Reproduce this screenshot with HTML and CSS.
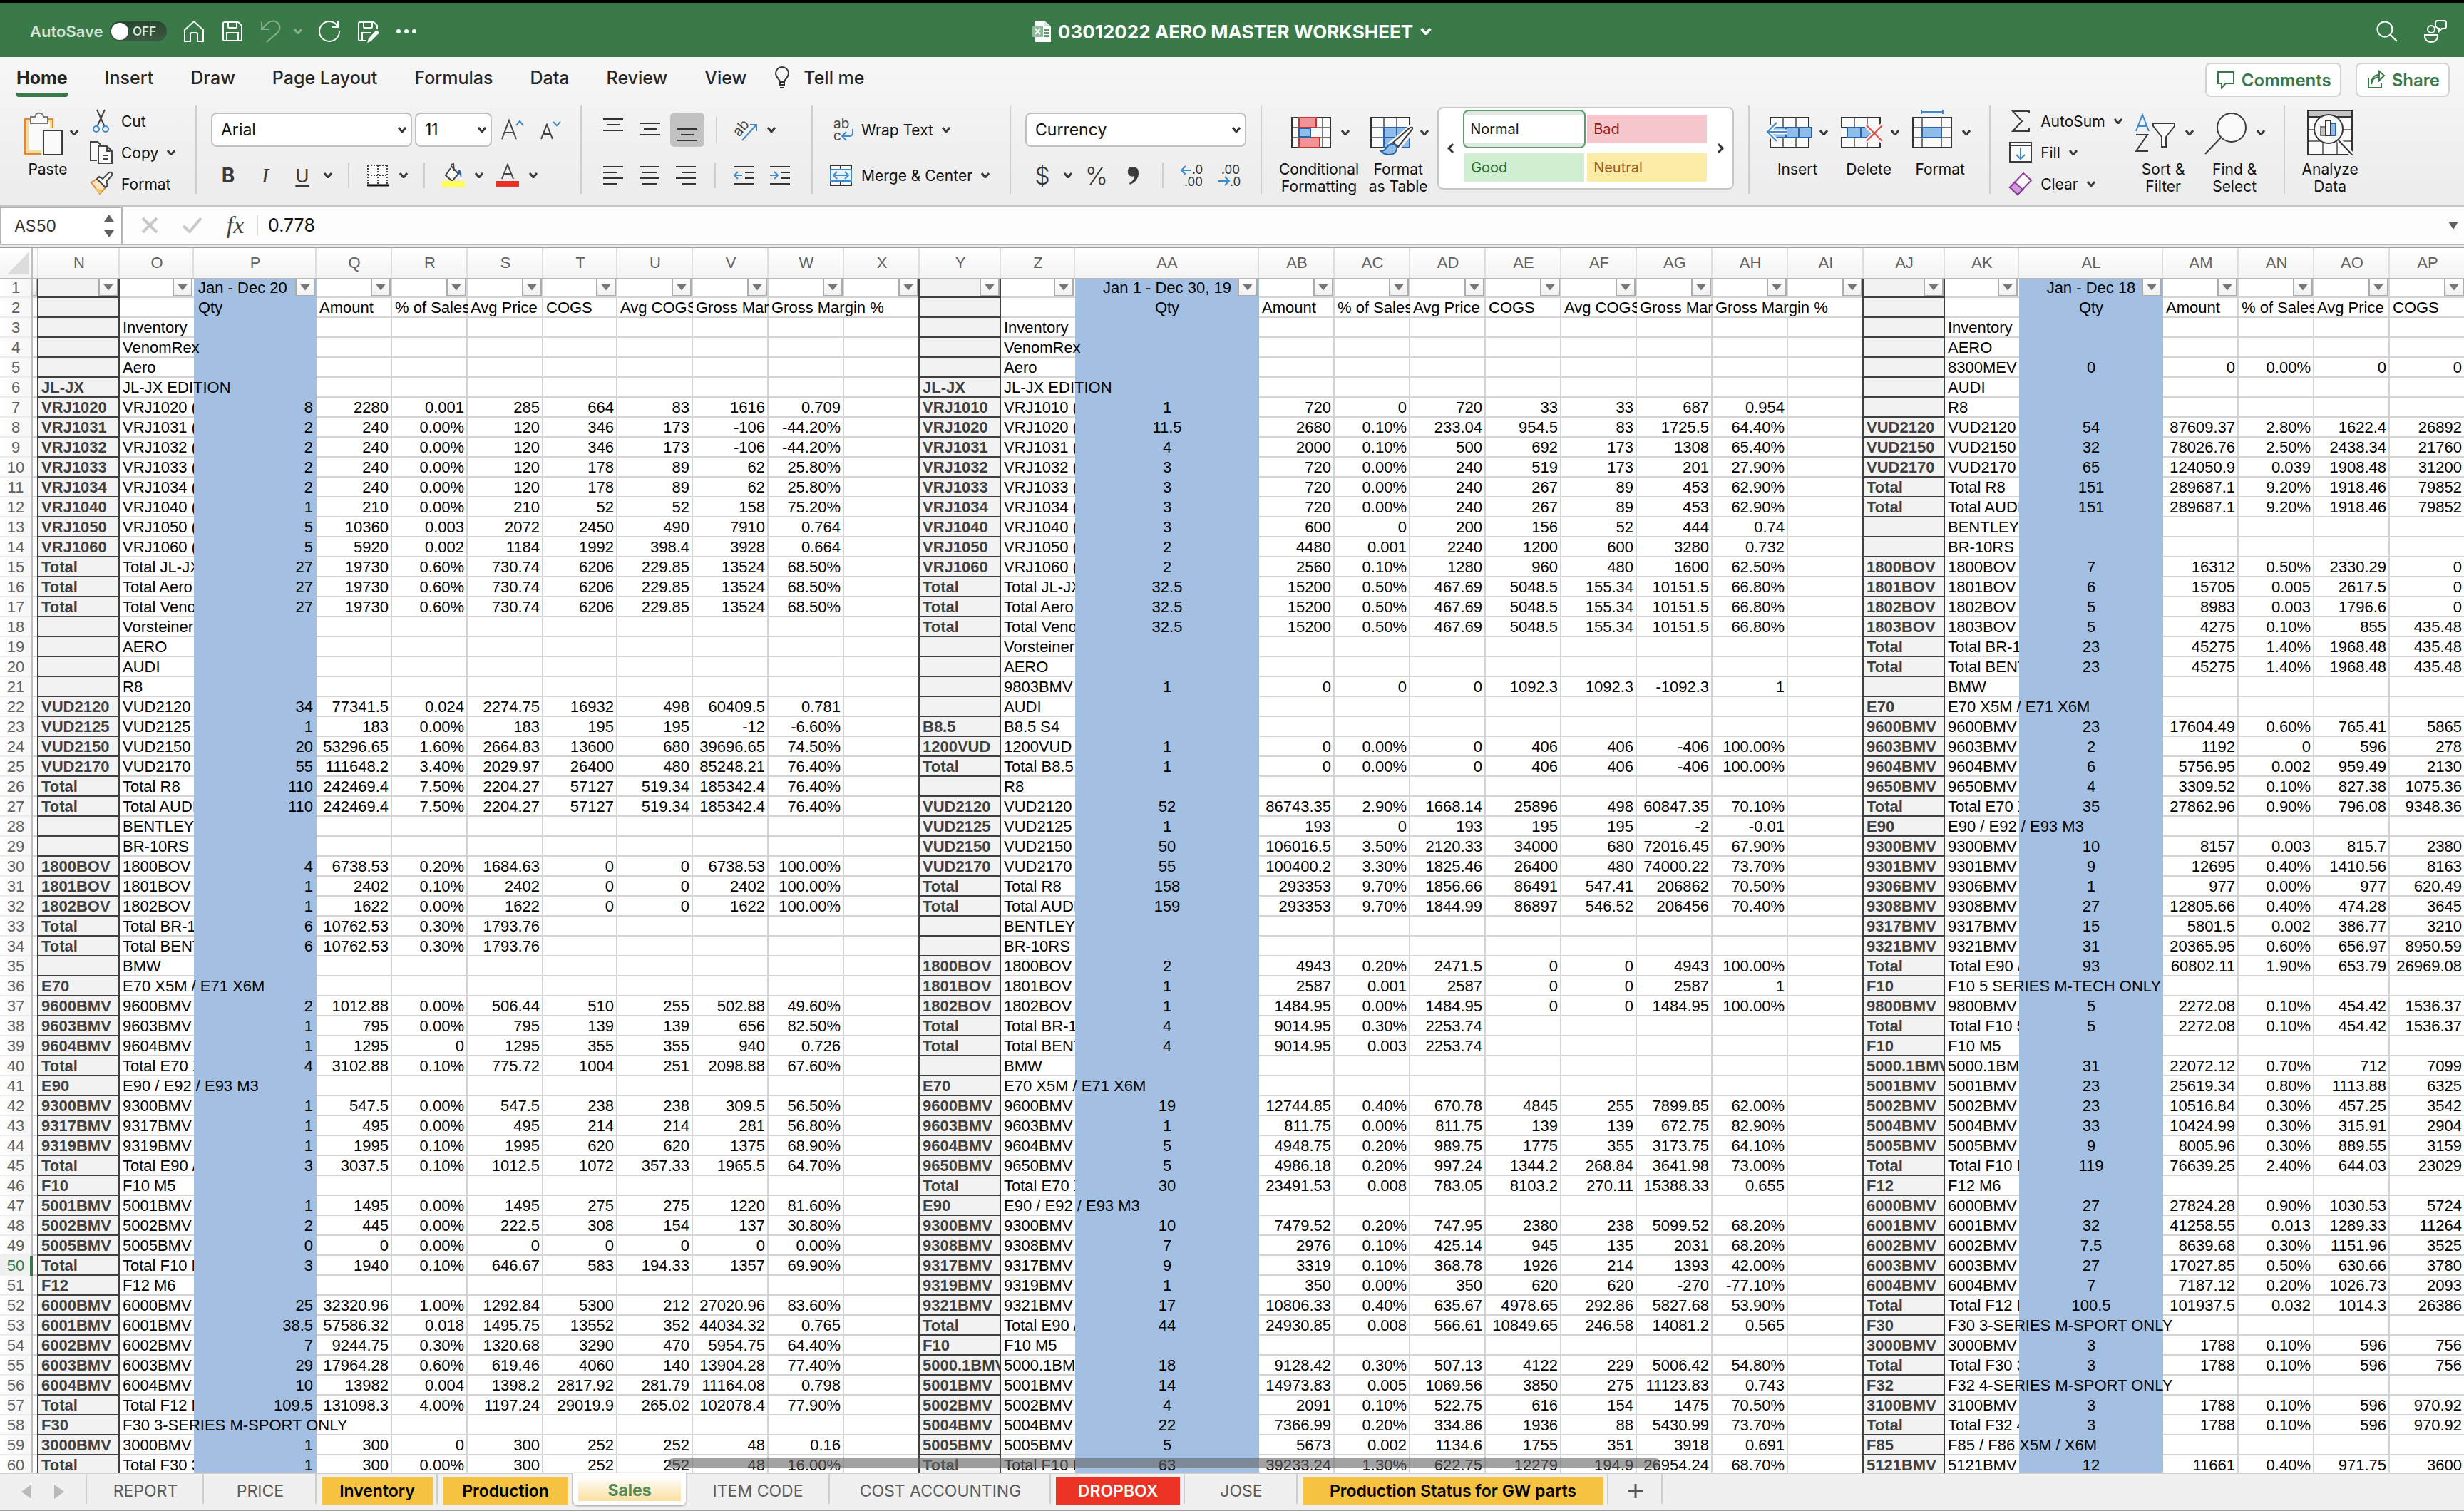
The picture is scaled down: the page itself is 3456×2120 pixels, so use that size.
FILE: index.html
```html
<!DOCTYPE html>
<html lang="en">
<head>
<meta charset="utf-8">
<meta name="viewport" content="width=device-width, initial-scale=1">
<title>03012022 AERO MASTER WORKSHEET</title>
<link rel="stylesheet" href="styles.css">
</head>
<body>
<svg class="sprite" aria-hidden="true">
  <symbol id="chev" viewBox="0 0 12 8"><path d="M1 1l5 6 5-6" fill="none" stroke="currentColor" stroke-width="3"/></symbol>
</svg>

<header class="titlebar">
  <div class="quick">
    <span class="autosave" id="as-label">AutoSave</span>
    <button class="toggle" role="switch" aria-checked="false" aria-labelledby="as-label"><span class="knob"></span>OFF</button>
    <button aria-label="Home"><svg class="i32" viewBox="0 0 32 32"><path d="M3 14L16 2l13 12v16h-8V20a2 2 0 0 0-2-2h-6a2 2 0 0 0-2 2v10H3z"/></svg></button>
    <button aria-label="Save"><svg class="i32" viewBox="0 0 32 32"><path d="M5 3h19l5 5v19a2 2 0 0 1-2 2H5a2 2 0 0 1-2-2V5a2 2 0 0 1 2-2zM10 3v7a1 1 0 0 0 1 1h10a1 1 0 0 0 1-1V3M8 29V18h16v11"/></svg></button>
    <button class="undo" aria-label="Undo"><svg class="i32" viewBox="0 0 32 32"><path d="M3 2v11h11M3 13L12 4c5-4 12-3 15 2s1 9-2 12L10 31"/></svg><svg class="chev"><use href="#chev"/></svg></button>
    <button aria-label="Redo"><svg class="i32" viewBox="0 0 32 32"><path d="M28 1v9h-9M28 10C25 4 21 2 16 2a14 14 0 1 0 14 14"/></svg></button>
    <button aria-label="Save as"><svg class="i32" viewBox="0 0 32 32"><path d="M14 29H5a2 2 0 0 1-2-2V5a2 2 0 0 1 2-2h19l5 5v5M10 3v7a1 1 0 0 0 1 1h10a1 1 0 0 0 1-1V3M8 29V18h12"/><path class="solid" d="M27 15c2-1 5 1 4 4L20 30l-5 2 2-6z"/></svg></button>
    <button aria-label="More"><svg class="i32" viewBox="0 0 32 32"><g class="solid"><circle cx="5" cy="16" r="3"/><circle cx="16" cy="16" r="3"/><circle cx="27" cy="16" r="3"/></g></svg></button>
  </div>
  <button class="doc">
    <svg class="docicon" viewBox="0 0 26 30"><path fill="#fff" d="M4 0h13l9 8v22H4z"/><path fill="#cfe0d3" d="M17 0l9 8h-9z"/><path fill="#5c9a6b" d="M16 12h4v3h-4zm5 0h3v3h-3zm-5 4h4v3h-4zm5 0h3v3h-3zm-5 4h4v3h-4zm5 0h3v3h-3z"/><rect y="7" width="15" height="16" rx="1" fill="#8fb89a"/><path d="M4 11l7 8M11 11l-7 8" stroke="#fff" stroke-width="2"/></svg>
    <span>03012022 AERO MASTER WORKSHEET</span>
    <svg class="chev big-chev"><use href="#chev"/></svg>
  </button>
  <div class="account">
    <button aria-label="Search"><svg class="i32" viewBox="0 0 32 32"><circle cx="13" cy="13" r="10.5"/><path d="M20 20l10 10"/></svg></button>
    <button aria-label="Presence"><svg class="i32" viewBox="0 0 32 32"><circle cx="10" cy="13" r="5"/><path d="M1 21h18v2c0 5-4 8-9 8s-9-3-9-8zM19 1h9a3 3 0 0 1 3 3v5a3 3 0 0 1-3 3h-3l-4 4v-4h-1l-4-3V4a3 3 0 0 1 3-3z"/></svg></button>
  </div>
</header>

<section class="ribbon">
  <nav class="tabs">
    <a href="#home" class="active">Home</a><a href="#insert">Insert</a><a href="#draw">Draw</a><a href="#layout">Page Layout</a><a href="#formulas">Formulas</a><a href="#data">Data</a><a href="#review">Review</a><a href="#view">View</a>
    <a href="#tell" class="tell"><svg viewBox="0 0 20 30"><path d="M7 21c0-4-6-6-6-12a9 9 0 0 1 18 0c0 6-6 8-6 12zM6 25h8M7 29h6M7 21v4M13 21v4" fill="none" stroke="#333" stroke-width="2"/></svg>Tell me</a>
    <button class="pill first"><svg viewBox="0 0 24 24"><path d="M1 1h22v16H12l-6 6v-6H1z" fill="none" stroke="#38784a" stroke-width="2"/></svg>Comments</button>
    <button class="pill"><svg viewBox="0 0 24 24"><path d="M1 9v14h18v-6M5 18c1-7 5-10 11-10v5l7-7-7-6v5C8 5 5 11 5 18z" fill="none" stroke="#38784a" stroke-width="2"/></svg>Share</button>
  </nav>

  <div class="groups">
    <div class="group clip">
      <button class="big"><span class="pic"><svg viewBox="0 0 64 64"><path d="M11 13h39v49H11z" fill="#f5dc92" stroke="#e0883a" stroke-width="2"/><path d="M16 17h30v40H16z" fill="#fafafa"/><path d="M19 10h6c1-7 11-7 12 0h6v9H19z" fill="#fafafa" stroke="#777" stroke-width="2"/><path d="M34 26h30v40H34z" fill="#f2f2f2"/><path d="M37 29h26v34H37z" fill="#fafafa" stroke="#3b3b3b" stroke-width="2"/></svg><svg class="chev"><use href="#chev"/></svg></span><span>Paste</span></button>
      <div class="list">
        <button><svg class="i32" viewBox="0 0 32 32"><path d="M10 0l11 24M21 0L10 24" fill="none" stroke="#444" stroke-width="2"/><g fill="none" stroke="#3f8acb" stroke-width="2"><circle cx="9" cy="27" r="4"/><circle cx="22" cy="27" r="4"/></g></svg>Cut</button>
        <button><svg class="i32" viewBox="0 0 32 32" fill="#fafafa" stroke="#444" stroke-width="2"><path d="M10 27H1V1h10l4 4"/><path d="M12 7h12l7 7v17H12zM24 7v7h7M18 20h8M18 25h8"/></svg>Copy<svg class="chev"><use href="#chev"/></svg></button>
        <button><svg class="i32" viewBox="0 0 32 32"><path d="M2 14l8-5 12 12-8 9z" fill="#fbe7c2" stroke="#e0883a" stroke-width="2"/><path d="M6 22l12 2-4 6z" fill="#f5c76b"/><path d="M10 9l3-3 5 3 9-9c3-1 5 1 4 4l-8 9 2 5-3 3z" fill="#fafafa" stroke="#444" stroke-width="2"/></svg>Format</button>
      </div>
    </div>
    <span class="sep"></span>

    <div class="group rows font">
      <div class="row">
        <select class="field font-name" aria-label="Font"><option>Arial</option></select>
        <select class="field font-size" aria-label="Font size"><option>11</option></select>
        <button class="ib" aria-label="Increase font size"><svg class="i32" viewBox="0 0 32 32"><path d="M2 29L12 3l10 26M6 20h13" fill="none" stroke="#444" stroke-width="2"/><path d="M22 10l5-6 5 6" fill="none" stroke="#3f8acb" stroke-width="2"/></svg></button>
        <button class="ib" aria-label="Decrease font size"><svg class="i32" viewBox="0 0 32 32"><path d="M5 29l8-20 8 20M8 22h10" fill="none" stroke="#444" stroke-width="2"/><path d="M22 5l5 5 5-5" fill="none" stroke="#3f8acb" stroke-width="2"/></svg></button>
      </div>
      <div class="row">
        <button class="ib b">B</button>
        <button class="ib i">I</button>
        <button class="split u"><span class="u-letter">U</span><svg class="chev"><use href="#chev"/></svg></button>
        <span class="sep short"></span>
        <button class="split" aria-label="Borders"><svg class="i32" viewBox="0 0 32 32"><path d="M2 2h28v28H2z" fill="#fafafa"/><path d="M2 2h28M2 2v27M29 2v27M2 16h27M16 2v27" fill="none" stroke="#444" stroke-width="2" stroke-dasharray="2 2"/><path d="M1 30h30" stroke="#111" stroke-width="3"/></svg><svg class="chev"><use href="#chev"/></svg></button>
        <span class="sep short"></span>
        <button class="split" aria-label="Fill colour"><svg class="i32" viewBox="0 0 32 32"><path d="M12 6L5 16l9 8 9-10L13 3v-2l3-1 1 10" fill="#fafafa" stroke="#444" stroke-width="2"/><path d="M22 8c5 0 6 5 5 12-2-4-2-6-5-8z" fill="#2a63a8"/><path d="M0 24h32v8H0z" fill="#ffff54"/></svg><svg class="chev"><use href="#chev"/></svg></button>
        <button class="split" aria-label="Font colour"><svg class="i32" viewBox="0 0 32 32"><path d="M8 21l8-20 8 20M11 14h10" fill="none" stroke="#444" stroke-width="2"/><path d="M0 24h32v8H0z" fill="#ea3323"/></svg><svg class="chev"><use href="#chev"/></svg></button>
      </div>
    </div>
    <span class="sep"></span>

    <div class="group rows align">
      <div class="row">
        <button class="ib" aria-label="Top align"><svg class="i32 ln" viewBox="0 0 32 32"><path d="M2 1h28M7 9h18M2 17h28"/></svg></button>
        <button class="ib" aria-label="Middle align"><svg class="i32 ln" viewBox="0 0 32 32"><path d="M2 7h28M7 15h18M2 23h28"/></svg></button>
        <button class="ib on" aria-label="Bottom align"><svg class="i32 ln" viewBox="0 0 32 32"><path d="M2 15h28M7 23h18M2 31h28"/></svg></button>
        <span class="sep short"></span>
        <button class="split" aria-label="Orientation"><svg class="i32" viewBox="0 0 32 32"><text x="-1" y="22" transform="rotate(-50 8 16)" class="tilt">ab</text><path d="M11 31L30 10M22 9h9v9" fill="none" stroke="#3f8acb" stroke-width="2"/></svg><svg class="chev"><use href="#chev"/></svg></button>
      </div>
      <div class="row">
        <button class="ib" aria-label="Align left"><svg class="i32 ln" viewBox="0 0 32 32"><path d="M2 4h28M2 12h20M2 20h28M2 28h20"/></svg></button>
        <button class="ib" aria-label="Centre"><svg class="i32 ln" viewBox="0 0 32 32"><path d="M2 4h28M6 12h20M2 20h28M6 28h20"/></svg></button>
        <button class="ib" aria-label="Align right"><svg class="i32 ln" viewBox="0 0 32 32"><path d="M2 4h28M10 12h20M2 20h28M10 28h20"/></svg></button>
        <span class="sep short"></span>
        <button class="ib" aria-label="Decrease indent"><svg class="i32 ln" viewBox="0 0 32 32"><path d="M2 4h28M18 12h12M18 20h12M2 28h28"/><path d="M14 16H3M8 11l-5 5 5 5" class="blue"/></svg></button>
        <button class="ib" aria-label="Increase indent"><svg class="i32 ln" viewBox="0 0 32 32"><path d="M2 4h28M18 12h12M18 20h12M2 28h28"/><path d="M2 16h11M8 11l5 5-5 5" class="blue"/></svg></button>
      </div>
    </div>
    <span class="sep"></span>

    <div class="group rows wrap">
      <div class="row"><button class="txt"><svg class="i32" viewBox="0 0 32 32"><text x="5" y="14" class="ab">ab</text><text x="5" y="31" class="ab">c</text><path d="M32 15v5c0 3-2 5-5 5H18M23 19l-6 6 6 6" fill="none" stroke="#3f8acb" stroke-width="2"/></svg>Wrap Text<svg class="chev"><use href="#chev"/></svg></button></div>
      <div class="row"><button class="txt"><svg class="i32" viewBox="0 0 32 32"><path d="M1 2h29v28H1z" fill="#fafafa" stroke="#333" stroke-width="2"/><path d="M15 2v6M15 24v6" stroke="#333" stroke-width="2"/><path d="M1 8h29v16H1z" fill="#e8f2fb" stroke="#3f8acb" stroke-width="2"/><path d="M6 16h19M10 11l-5 5 5 5M21 11l5 5-5 5" fill="none" stroke="#3f8acb" stroke-width="2"/></svg>Merge &amp; Center<svg class="chev"><use href="#chev"/></svg></button></div>
    </div>
    <span class="sep"></span>

    <div class="group rows number">
      <div class="row"><select class="field format" aria-label="Number format"><option>Currency</option></select></div>
      <div class="row">
        <button class="split sym"><span>$</span><svg class="chev"><use href="#chev"/></svg></button>
        <button class="ib sym">%</button>
        <button class="ib" aria-label="Comma style"><svg class="i32" viewBox="0 0 32 32"><path d="M15 4c5 0 8 3 8 9 0 8-5 13-12 16l-1-2c5-3 7-6 7-10-6 2-10-2-9-7 0-4 3-6 7-6z" fill="#3b3b3b"/></svg></button>
        <span class="sep short"></span>
        <button class="ib" aria-label="Increase decimal"><svg class="i32 dec" viewBox="0 0 32 32"><text x="16" y="14">.0</text><text x="5" y="31">.00</text><path d="M15 9H1M7 3L1 9l6 6"/></svg></button>
        <button class="ib" aria-label="Decrease decimal"><svg class="i32 dec" viewBox="0 0 32 32"><text x="5" y="14">.00</text><text x="17" y="31">.0</text><path d="M0 24h15M10 18l6 6-6 6"/></svg></button>
      </div>
    </div>
    <span class="sep"></span>

    <div class="group styles">
      <button class="big"><span class="pic"><svg viewBox="0 0 64 64"><path d="M5 11h54v42H5z" fill="#fafafa"/><path d="M5 25h54M5 39h54M14 11v42M48 11v42" stroke="#777" stroke-width="2"/><path d="M5 11h54v42H5z" fill="none" stroke="#333" stroke-width="2"/><path d="M15 11h24v14H15zM15 39h29v14H15z" fill="#f0949a" stroke="#c8352b" stroke-width="2"/><path d="M15 26h16v12H15z" fill="#8fbce8" stroke="#2a63a8" stroke-width="2"/></svg><svg class="chev"><use href="#chev"/></svg></span><span>Conditional<br>Formatting</span></button>
      <button class="big"><span class="pic"><svg viewBox="0 0 64 64"><path d="M5 11h54v42H5z" fill="#fafafa"/><path d="M23 25h36v28H23z" fill="#8fbce8"/><path d="M5 25h18M5 39h18M23 11v14M41 11v14" stroke="#777" stroke-width="2"/><path d="M59 26V11H5v42h18" fill="none" stroke="#333" stroke-width="2"/><path d="M23 53V25h36v28zM23 39h36M41 25v28" fill="none" stroke="#2a63a8" stroke-width="2"/><path d="M64 24c-2-1-6 1-9 5L33 47l9 8 19-23c3-4 4-7 3-8z" fill="#fff" stroke="#f6f6f6" stroke-width="6"/><path d="M63 25c-2-1-5 1-8 4L36 46l7 6 17-21c3-4 4-5 3-6z" fill="#fafafa" stroke="#3b3b3b" stroke-width="2"/><path d="M19 58c7 1 7-8 14-10 7-1 10 5 7 10-3 6-15 7-21 0z" fill="#8fbce8" stroke="#2a63a8" stroke-width="2"/></svg><svg class="chev"><use href="#chev"/></svg></span><span>Format<br>as Table</span></button>
      <div class="gallery">
        <button class="arrow" aria-label="Previous styles"><svg viewBox="0 0 10 14"><path d="M8 1L2 7l6 6"/></svg></button>
        <div class="swatches">
          <button class="normal"><span>Normal</span></button>
          <button class="bad">Bad</button>
          <button class="good">Good</button>
          <button class="neutral">Neutral</button>
        </div>
        <button class="arrow" aria-label="More styles"><svg viewBox="0 0 10 14"><path d="M2 1l6 6-6 6"/></svg></button>
      </div>
    </div>
    <span class="sep"></span>

    <div class="group cells">
      <button class="big"><span class="pic"><svg viewBox="0 0 64 64"><path d="M5 11h54v42H5z" fill="#fafafa"/><path d="M23 11v14M41 11v14M23 39v14M41 39v14" stroke="#777" stroke-width="2"/><path d="M5 24V11h54v14M5 40v13h54V39" fill="none" stroke="#333" stroke-width="2"/><path d="M10 25h53v14H10z" fill="#8fbce8" stroke="#2a63a8" stroke-width="2"/><path d="M27 25v14M45 25v14" stroke="#2a63a8" stroke-width="2"/><path d="M28 31H2M14 18L1 31l13 13" fill="none" stroke="#f4f4f4" stroke-width="7"/><path d="M28 31H2M14 18L1 31l13 13" fill="none" stroke="#3f8acb" stroke-width="2"/></svg><svg class="chev"><use href="#chev"/></svg></span><span>Insert</span></button>
      <button class="big"><span class="pic"><svg viewBox="0 0 64 64"><path d="M5 11h54v42H5z" fill="#fafafa"/><path d="M23 11v14M41 11v14M23 39v14M41 39v14" stroke="#777" stroke-width="2"/><path d="M15 25H5V11h54v12M15 39H5v14h54V42" fill="none" stroke="#333" stroke-width="2"/><path d="M13 25h27l8 7-8 7H13z" fill="#8fbce8" stroke="#2a63a8" stroke-width="2"/><path d="M32 25v14" stroke="#2a63a8" stroke-width="2"/><path d="M40 22l22 22M62 22L40 44" stroke="#f4f4f4" stroke-width="7"/><path d="M40 22l22 22M62 22L40 44" stroke="#e04a3f" stroke-width="2"/></svg><svg class="chev"><use href="#chev"/></svg></span><span>Delete</span></button>
      <button class="big"><span class="pic"><svg viewBox="0 0 64 64"><path d="M5 11h54v42H5z" fill="#fafafa"/><path d="M5 25h54M5 39h54M18 11v42M45 11v42" stroke="#777" stroke-width="2"/><path d="M5 11h54v42H5z" fill="none" stroke="#333" stroke-width="2"/><path d="M18 25h27v14H18z" fill="#8fbce8" stroke="#2a63a8" stroke-width="2"/><path d="M17 3h30M17 0v6M47 0v6" stroke="#3f8acb" stroke-width="2"/></svg><svg class="chev"><use href="#chev"/></svg></span><span>Format</span></button>
    </div>
    <span class="sep"></span>

    <div class="group editing">
      <div class="list">
        <button><svg class="i32" viewBox="0 0 32 32"><path d="M28 5V2H5l13 14L5 30h23v-4" fill="none" stroke="#3b3b3b" stroke-width="2"/></svg>AutoSum<svg class="chev"><use href="#chev"/></svg></button>
        <button><svg class="i32" viewBox="0 0 32 32"><path d="M1 2h30v27H1zM1 6h30" fill="#fafafa" stroke="#3b3b3b" stroke-width="2"/><path d="M16 9v15M10 19l6 6 6-6" fill="none" stroke="#3f8acb" stroke-width="2"/></svg>Fill<svg class="chev"><use href="#chev"/></svg></button>
        <button><svg class="i32" viewBox="0 0 32 32"><path d="M1 21L20 1l11 10-19 20z" fill="#fafafa" stroke="#8c3a9c" stroke-width="2"/><path d="M1 21l7-7 11 10-7 7z" fill="#cf9bd9" stroke="#8c3a9c" stroke-width="2"/></svg>Clear<svg class="chev"><use href="#chev"/></svg></button>
      </div>
      <button class="big"><span class="pic"><svg viewBox="0 0 64 64"><path d="M5 30l9-23 9 23M8 23h12" fill="none" stroke="#3f8acb" stroke-width="2"/><path d="M5 35h16L5 58h17" fill="none" stroke="#3b3b3b" stroke-width="2"/><path d="M29 19h30v4L47 38v14h-6V38L29 23z" fill="#fafafa" stroke="#3b3b3b" stroke-width="2"/></svg><svg class="chev"><use href="#chev"/></svg></span><span>Sort &amp;<br>Filter</span></button>
      <button class="big"><span class="pic"><svg viewBox="0 0 64 64"><circle cx="39" cy="25" r="20" fill="#fafafa" stroke="#3b3b3b" stroke-width="2"/><path d="M24 39L2 62" stroke="#3b3b3b" stroke-width="2"/></svg><svg class="chev"><use href="#chev"/></svg></span><span>Find &amp;<br>Select</span></button>
    </div>
    <span class="sep"></span>

    <div class="group analyze">
      <button class="big"><span class="pic"><svg viewBox="0 0 64 64"><path d="M1 1h62v62H1z" fill="#fafafa"/><path d="M1 1h62v9H1z" fill="#c4c4c4"/><path d="M1 28h62M1 44h62M22 44v19M42 44v19" stroke="#777" stroke-width="2"/><path d="M1 1h62v62H1zM1 10h62" fill="none" stroke="#333" stroke-width="2"/><path d="M44 42l19 21" stroke="#fafafa" stroke-width="7"/><circle cx="30" cy="27" r="20" fill="#fafafa" stroke="#333" stroke-width="2"/><path d="M44 43l19 20" stroke="#333" stroke-width="2"/><path d="M19 24h7v12h-7z" fill="#c4c4c4" stroke="#777" stroke-width="2"/><path d="M33 19h7v17h-7z" fill="#8fbce8" stroke="#2a63a8" stroke-width="2"/><path d="M26 15h7v21h-7z" fill="#fafafa" stroke="#333" stroke-width="2"/></svg></span><span>Analyze<br>Data</span></button>
    </div>
  </div>
</section>

<section class="formula">
  <div class="namebox">
    <input type="text" value="AS50" aria-label="Name box">
    <svg viewBox="0 0 14 32"><path d="M0 10L7 0l7 10zM0 22h14L7 32z" fill="#606060"/></svg>
  </div>
  <button class="fb" aria-label="Cancel"><svg viewBox="0 0 28 28"><path d="M4 4l20 20M24 4L4 24" stroke="#c9c9c9" stroke-width="4"/></svg></button>
  <button class="fb" aria-label="Enter"><svg viewBox="0 0 28 28"><path d="M1 15l9 8L26 4" fill="none" stroke="#c9c9c9" stroke-width="4"/></svg></button>
  <button class="fb fx">fx</button>
  <span class="fsep"></span>
  <input class="content" type="text" value="0.778" aria-label="Formula">
  <button class="expand" aria-label="Expand formula bar"><svg viewBox="0 0 14 11"><path d="M0 0h14L7 11z" fill="#606060"/></svg></button>
</section>

<main class="sheet">
  <table id="grid"></table>
  <div class="hscroll"></div>
</main>

<footer class="sheetbar">
  <div class="nav">
    <button aria-label="Previous sheet"><svg viewBox="0 0 14 20"><path d="M14 0v20L0 10z" fill="#b9b9b9"/></svg></button>
    <button aria-label="Next sheet"><svg viewBox="0 0 14 20"><path d="M0 0v20l14-10z" fill="#b9b9b9"/></svg></button>
  </div>
  <div class="sheets">
    <button>REPORT</button>
    <button>PRICE</button>
    <button class="amber"><span>Inventory</span></button>
    <button class="amber"><span>Production</span></button>
    <button class="current"><span>Sales</span></button>
    <button>ITEM CODE</button>
    <button>COST ACCOUNTING</button>
    <button class="red"><span>DROPBOX</span></button>
    <button>JOSE</button>
    <button class="amber"><span>Production Status for GW parts</span></button>
    <button aria-label="New sheet"><svg viewBox="0 0 20 20"><path d="M10 0v20M0 10h20" stroke="#555" stroke-width="3"/></svg></button>
  </div>
</footer>
<script src="sheet.js"></script>
</body>
</html>
```

FILE: styles.css
```css
* { box-sizing: border-box; }
html, body { margin: 0; height: 100%; }
body {
  display: flex;
  flex-direction: column;
  overflow: hidden;
  background: #fff;
  color: #111;
  font-family: Inter, "Liberation Sans", sans-serif;
  font-size: 21px;
}
button, input, select {
  font: inherit;
  color: inherit;
  background: none;
  border: 0;
  padding: 0;
  margin: 0;
}
a { color: inherit; text-decoration: none; }
svg { display: block; flex: none; overflow: visible; }
.sprite { position: absolute; width: 0; height: 0; }
.i32 { width: 32px; height: 32px; }
.chev { width: 12px; height: 8px; color: #3b3b3b; }

/* Title bar */
.titlebar {
  flex: none;
  display: grid;
  grid-template-columns: 1fr auto 1fr;
  align-items: center;
  height: 80px;
  padding-top: 4px;
  border-top: 4px solid #000;
  background: #397a48;
  color: #fff;
}
.titlebar .i32 { fill: none; stroke: #fff; stroke-width: 2; }
.titlebar .solid { fill: #fff; stroke: none; }
.titlebar .chev { color: #fff; }
.quick { display: flex; align-items: center; gap: 22px; padding-left: 42px; }
.autosave { width: 90px; font-size: 22px; font-weight: 600; color: #d5e5d9; white-space: nowrap; }
.toggle {
  display: flex;
  align-items: center;
  gap: 6px;
  width: 80px;
  height: 28px;
  padding: 0 2px;
  border-radius: 14px;
  background: linear-gradient(#29452f, #3d5a45);
  color: #d5e5d9;
  font-size: 17px;
  font-weight: 600;
}
.knob { width: 24px; height: 24px; border-radius: 12px; background: #fff; }
.undo { display: flex; align-items: center; gap: 16px; opacity: .4; }
.doc { display: flex; align-items: center; gap: 10px; font-size: 26px; font-weight: 700; }
.docicon { width: 26px; height: 30px; }
.big-chev { width: 16px; height: 10px; }
.account { display: flex; justify-content: flex-end; gap: 36px; padding-right: 24px; }

/* Ribbon */
.ribbon {
  flex: none;
  height: 210px;
  border-bottom: 2px solid #c6c6c6;
  background: linear-gradient(#f7f7f7, #f2f2f2 40%, #ececec);
}
.tabs { display: flex; align-items: flex-start; height: 68px; padding: 8px 20px 0 23px; gap: 52px; }
.tabs a { height: 48px; line-height: 42px; font-size: 25px; font-weight: 500; color: #262626; white-space: nowrap; }
.tabs a.active { font-weight: 700; border-bottom: 6px solid #38784a; border-radius: 3px; }
.tabs .tell { display: flex; gap: 20px; margin-left: -12px; }
.tell svg { width: 20px; height: 30px; margin-top: 6px; }
.pill {
  display: flex;
  align-items: center;
  gap: 10px;
  height: 48px;
  padding: 0 12px 0 15px;
  margin-left: -32px;
  border: 2px solid #d2d2d2;
  border-radius: 8px;
  background: #fff;
  color: #38784a;
  font-size: 24px;
  font-weight: 600;
}
.pill.first { margin-left: auto; }
.pill svg { width: 24px; height: 24px; }
.groups { display: flex; height: 132px; }
.sep { flex: none; width: 2px; height: 124px; background: #cfcfcf; }
.sep.short { height: 36px; margin: 0 12px; }
.group { flex: none; display: flex; gap: 14px; }
.rows { flex-direction: column; gap: 16px; padding: 10px 20px 0; }
.row { display: flex; align-items: center; gap: 4px; height: 48px; }

.big { display: flex; flex-direction: column; align-items: center; gap: 8px; min-width: 86px; padding-top: 6px; line-height: 24px; white-space: nowrap; height: 126px; }
.pic { display: flex; align-items: center; gap: 10px; }
.pic svg:first-child { width: 64px; height: 64px; }
.list button { display: flex; align-items: center; gap: 12px; height: 44px; }

.ib { display: flex; align-items: center; justify-content: center; width: 48px; height: 48px; border-radius: 6px; }
.ib.on { background: #c2c2c2; }
.split { display: flex; align-items: center; gap: 14px; height: 48px; padding: 0 6px 0 8px; }
.split > span { width: 32px; text-align: center; }
.txt { display: flex; align-items: center; gap: 12px; height: 48px; white-space: nowrap; }
.b { font-size: 28px; font-weight: 700; color: #3b3b3b; }
.i { font: italic 30px "Liberation Serif", serif; color: #3b3b3b; }
.u-letter { font-size: 26px; text-decoration: underline; text-underline-offset: 4px; color: #3b3b3b; }
.sym { font-size: 34px; font-weight: 300; color: #333; }
.ln { fill: none; stroke: #333; stroke-width: 2; }
.ln .blue { stroke: #3f8acb; }
.ab { font-size: 19px; fill: #444; }
.tilt { font-size: 20px; fill: #444; }
.dec { font-size: 17px; fill: #333; }
.dec path { fill: none; stroke: #3f8acb; stroke-width: 2; }

.field {
  appearance: none;
  height: 48px;
  padding: 0 12px;
  border: 2px solid #c0c0c0;
  border-radius: 8px;
  background: #fff url('data:image/svg+xml,<svg xmlns="http://www.w3.org/2000/svg" width="12" height="8" viewBox="0 0 12 8"><path d="M1 1l5 6 5-6" fill="none" stroke="%23333" stroke-width="3"/></svg>') no-repeat right 6px center;
  font-size: 23px;
}
.clip { width: 274px; padding-left: 24px; gap: 16px; }
.font-name { width: 282px; }
.font-size { width: 108px; }
.align { width: 322px; }
.wrap { width: 276px; padding-left: 24px; }
.format { width: 310px; }
.styles { gap: 12px; padding: 0 20px 0 24px; }
.cells { padding: 0 26px 0 24px; }
.editing { padding: 0 26px; }
.editing .list { width: 159px; }
.analyze { padding-left: 20px; }

.gallery { display: flex; width: 416px; height: 116px; margin-top: 2px; border: 2px solid #c6c6c6; border-radius: 8px; background: #fff; }
.arrow { display: flex; align-items: center; justify-content: center; flex: 1; }
.arrow svg { width: 10px; height: 14px; fill: none; stroke: #333; stroke-width: 3; }
.swatches { display: grid; grid-template-columns: 172px 172px; grid-template-rows: 54px 54px; place-items: center; padding-top: 2px; }
.swatches button { width: 168px; height: 40px; padding-left: 9px; text-align: left; font-size: 20px; }
.swatches .normal { display: flex; align-items: center; width: 172px; height: 54px; padding: 6px 0; border: 2px solid #5f9c71; border-radius: 8px; background: #dce9e0; }
.normal span { flex: 1; padding-left: 8px; line-height: 40px; background: #fff; }
.bad { background: #f6c8cd; color: #971a14; }
.good { background: #cfeed2; color: #2c6a1c; }
.neutral { background: #fceba6; color: #985c18; }

/* Formula bar */
.formula { flex: none; display: flex; align-items: center; height: 58px; border-bottom: 2px solid #9da19d; box-shadow: inset 0 -2px #ececec, inset 0 -4px #b4b6b4; padding-bottom: 4px; background: #fdfdfd; }
.namebox { display: flex; align-items: center; width: 172px; height: 100%; padding: 0 10px 0 18px; margin-right: 8px; border: 2px solid #b4b4b4; border-bottom: 0; background: #fff; }
.namebox input { flex: 1; min-width: 0; font-size: 23px; color: #333; }
.namebox svg { width: 14px; height: 32px; }
.fb { display: flex; justify-content: center; width: 60px; }
.fb svg { width: 28px; height: 28px; }
.fx { font: italic 34px/34px "Liberation Serif", serif; color: #444; }
.fsep { width: 2px; height: 30px; background: #dcdcdc; }
.content { flex: 1; padding-left: 14px; font-size: 25px; }
.expand { padding-right: 8px; }
.expand svg { width: 14px; height: 11px; }

/* Grid */
.sheet { flex: 1; position: relative; min-height: 0; overflow: hidden; font: 22px/28px "Liberation Sans", Arial, sans-serif; color: #000; }
#grid { border-collapse: separate; border-spacing: 0; table-layout: fixed; width: 0; }
#grid th { padding: 0; font-weight: 400; color: #616161; text-align: center; }
#grid thead th {
  height: 44px;
  line-height: 42px;
  border-bottom: 2px solid #b8b8b8;
  background: linear-gradient(#fff, #f3f3f3);
  box-shadow: inset -2px 0 #dedede;
}
#grid thead .corner { box-shadow: inset -2px 0 #bcbcbc; }
.corner svg { width: 30px; height: 31px; margin-left: 10px; }
#grid tbody th {
  height: 28px;
  padding-right: 2px;
  background: linear-gradient(90deg, #fff, #f5f5f5);
  box-shadow: inset -2px 0 #bcbcbc, inset 0 -2px #ececec;
}
#grid tbody th.here { background: #f0f0f0; color: #38784a; box-shadow: inset -4px 0 #38784a; }
#grid td {
  position: relative;
  height: 28px;
  padding: 0 6px 0 4px;
  white-space: nowrap;
  overflow: hidden;
  box-shadow: inset -2px -2px #d4d4d4;
}
#grid tbody tr:first-child > * { height: 26px; line-height: 24px; padding-bottom: 2px; }
#grid td.num { text-align: right; padding-right: 5px; }
#grid td.spill { overflow: visible; z-index: 1; }
#grid td.name { box-shadow: inset 0 -2px #d4d4d4; }
#grid td.qty { padding-left: 6px; background: #a3c0e3; box-shadow: none; }
#grid td.mid { text-align: center; padding: 0; }
#grid td.edge { box-shadow: inset -2px 0 #3f3f3f, inset 0 -2px #d4d4d4; }
#grid td.code { background: #f2f2f2; color: #3f3f3f; font-weight: 700; box-shadow: inset -2px -2px #3f3f3f; }
#grid td.open { box-shadow: inset 0 -2px #d4d4d4; }
.filter { position: absolute; right: 2px; top: 0; width: 28px; height: 24px; border: 2px solid #adadad; border-top: 0; background: linear-gradient(#fff, #efefef); }
.filter::before { content: ""; display: block; margin: 0 auto; width: 14px; height: 9px; background: #777; clip-path: polygon(0 0, 100% 0, 50% 100%); }
.hscroll { position: absolute; left: 27.1%; width: 40.3%; bottom: 6px; height: 14px; border-radius: 7px; background: rgba(100, 100, 100, .6); z-index: 2; }

/* Sheet tabs */
.sheetbar { flex: none; display: flex; height: 54px; border-top: 2px solid #cfcfcf; border-bottom: 2px solid #9e9e9e; background: #f0f0f0; color: #5c5c5c; font-size: 23px; }
.nav, .sheets button { background: linear-gradient(#cdcdcd, #cdcdcd) right top / 2px 42px no-repeat; }
.nav { display: flex; align-items: center; gap: 32px; width: 122px; padding-left: 30px; }
.nav svg { width: 14px; height: 20px; }
.sheets { display: grid; grid-template-columns: 164px 158px 170px 190px 158px 202px 310px 188px 158px 436px 76px; }
.sheets button { display: flex; align-items: center; justify-content: center; padding-bottom: 2px; white-space: nowrap; }
.sheets button span { display: flex; align-items: center; justify-content: center; height: 40px; flex: 1; margin: 0 7px; }
.sheets svg { width: 20px; height: 20px; }
.amber span { background: #f5c242; color: #000; font-weight: 600; }
.red span { background: #ea3323; color: #fff; font-weight: 600; }
.sheets .current { align-self: start; height: 46px; margin-top: -2px; padding: 0; border-radius: 0 0 6px 6px; background: #fff; box-shadow: 0 1px 3px #999; color: #4f8a5c; font-weight: 700; }
.sheets .current span { height: 34px; padding-top: 4px; background: linear-gradient(#fff, #fbdf9f); }
```

FILE: sheet.js
```js
// Each line is one row, starting at sheet row 3:
// code | name ("=" repeats the code) | qty | remaining values
const year20 = `|Inventory
|VenomRex
|Aero
JL-JX|JL-JX EDITION
VRJ1020|= (|8|2280|0.001|285|664|83|1616|0.709
VRJ1031|= (|2|240|0.00%|120|346|173|-106|-44.20%
VRJ1032|= (|2|240|0.00%|120|346|173|-106|-44.20%
VRJ1033|= (|2|240|0.00%|120|178|89|62|25.80%
VRJ1034|= (|2|240|0.00%|120|178|89|62|25.80%
VRJ1040|= (|1|210|0.00%|210|52|52|158|75.20%
VRJ1050|= (|5|10360|0.003|2072|2450|490|7910|0.764
VRJ1060|= (|5|5920|0.002|1184|1992|398.4|3928|0.664
Total|Total JL-JX|27|19730|0.60%|730.74|6206|229.85|13524|68.50%
Total|Total Aero|27|19730|0.60%|730.74|6206|229.85|13524|68.50%
Total|Total VenomRex|27|19730|0.60%|730.74|6206|229.85|13524|68.50%
|Vorsteiner
|AERO
|AUDI
|R8
VUD2120|=|34|77341.5|0.024|2274.75|16932|498|60409.5|0.781
VUD2125|=|1|183|0.00%|183|195|195|-12|-6.60%
VUD2150|=|20|53296.65|1.60%|2664.83|13600|680|39696.65|74.50%
VUD2170|=|55|111648.2|3.40%|2029.97|26400|480|85248.21|76.40%
Total|Total R8|110|242469.4|7.50%|2204.27|57127|519.34|185342.4|76.40%
Total|Total AUDI|110|242469.4|7.50%|2204.27|57127|519.34|185342.4|76.40%
|BENTLEY
|BR-10RS
1800BOV|=|4|6738.53|0.20%|1684.63|0|0|6738.53|100.00%
1801BOV|=|1|2402|0.10%|2402|0|0|2402|100.00%
1802BOV|=|1|1622|0.00%|1622|0|0|1622|100.00%
Total|Total BR-10RS|6|10762.53|0.30%|1793.76
Total|Total BENTLEY|6|10762.53|0.30%|1793.76
|BMW
E70|E70 X5M / E71 X6M
9600BMV|=|2|1012.88|0.00%|506.44|510|255|502.88|49.60%
9603BMV|=|1|795|0.00%|795|139|139|656|82.50%
9604BMV|=|1|1295|0|1295|355|355|940|0.726
Total|Total E70 X5M|4|3102.88|0.10%|775.72|1004|251|2098.88|67.60%
E90|E90 / E92 / E93 M3
9300BMV|=|1|547.5|0.00%|547.5|238|238|309.5|56.50%
9317BMV|=|1|495|0.00%|495|214|214|281|56.80%
9319BMV|=|1|1995|0.10%|1995|620|620|1375|68.90%
Total|Total E90 / E92|3|3037.5|0.10%|1012.5|1072|357.33|1965.5|64.70%
F10|F10 M5
5001BMV|=|1|1495|0.00%|1495|275|275|1220|81.60%
5002BMV|=|2|445|0.00%|222.5|308|154|137|30.80%
5005BMV|=|0|0|0.00%|0|0|0|0|0.00%
Total|Total F10 M5|3|1940|0.10%|646.67|583|194.33|1357|69.90%
F12|F12 M6
6000BMV|=|25|32320.96|1.00%|1292.84|5300|212|27020.96|83.60%
6001BMV|=|38.5|57586.32|0.018|1495.75|13552|352|44034.32|0.765
6002BMV|=|7|9244.75|0.30%|1320.68|3290|470|5954.75|64.40%
6003BMV|=|29|17964.28|0.60%|619.46|4060|140|13904.28|77.40%
6004BMV|=|10|13982|0.004|1398.2|2817.92|281.79|11164.08|0.798
Total|Total F12 M6|109.5|131098.3|4.00%|1197.24|29019.9|265.02|102078.4|77.90%
F30|F30 3-SERIES M-SPORT ONLY
3000BMV|=|1|300|0|300|252|252|48|0.16
Total|Total F30 3-SERIES|1|300|0.00%|300|252|252|48|16.00%`;

const year19 = `|Inventory
|VenomRex
|Aero
JL-JX|JL-JX EDITION
VRJ1010|= (|1|720|0|720|33|33|687|0.954
VRJ1020|= (|11.5|2680|0.10%|233.04|954.5|83|1725.5|64.40%
VRJ1031|= (|4|2000|0.10%|500|692|173|1308|65.40%
VRJ1032|= (|3|720|0.00%|240|519|173|201|27.90%
VRJ1033|= (|3|720|0.00%|240|267|89|453|62.90%
VRJ1034|= (|3|720|0.00%|240|267|89|453|62.90%
VRJ1040|= (|3|600|0|200|156|52|444|0.74
VRJ1050|= (|2|4480|0.001|2240|1200|600|3280|0.732
VRJ1060|= (|2|2560|0.10%|1280|960|480|1600|62.50%
Total|Total JL-JX|32.5|15200|0.50%|467.69|5048.5|155.34|10151.5|66.80%
Total|Total Aero|32.5|15200|0.50%|467.69|5048.5|155.34|10151.5|66.80%
Total|Total VenomRex|32.5|15200|0.50%|467.69|5048.5|155.34|10151.5|66.80%
|Vorsteiner
|AERO
|9803BMV|1|0|0|0|1092.3|1092.3|-1092.3|1
|AUDI
B8.5|B8.5 S4
1200VUD|=|1|0|0.00%|0|406|406|-406|100.00%
Total|Total B8.5 S4|1|0|0.00%|0|406|406|-406|100.00%
|R8
VUD2120|=|52|86743.35|2.90%|1668.14|25896|498|60847.35|70.10%
VUD2125|=|1|193|0|193|195|195|-2|-0.01
VUD2150|=|50|106016.5|3.50%|2120.33|34000|680|72016.45|67.90%
VUD2170|=|55|100400.2|3.30%|1825.46|26400|480|74000.22|73.70%
Total|Total R8|158|293353|9.70%|1856.66|86491|547.41|206862|70.50%
Total|Total AUDI|159|293353|9.70%|1844.99|86897|546.52|206456|70.40%
|BENTLEY
|BR-10RS
1800BOV|=|2|4943|0.20%|2471.5|0|0|4943|100.00%
1801BOV|=|1|2587|0.001|2587|0|0|2587|1
1802BOV|=|1|1484.95|0.00%|1484.95|0|0|1484.95|100.00%
Total|Total BR-10RS|4|9014.95|0.30%|2253.74
Total|Total BENTLEY|4|9014.95|0.003|2253.74
|BMW
E70|E70 X5M / E71 X6M
9600BMV|=|19|12744.85|0.40%|670.78|4845|255|7899.85|62.00%
9603BMV|=|1|811.75|0.00%|811.75|139|139|672.75|82.90%
9604BMV|=|5|4948.75|0.20%|989.75|1775|355|3173.75|64.10%
9650BMV|=|5|4986.18|0.20%|997.24|1344.2|268.84|3641.98|73.00%
Total|Total E70 X5M|30|23491.53|0.008|783.05|8103.2|270.11|15388.33|0.655
E90|E90 / E92 / E93 M3
9300BMV|=|10|7479.52|0.20%|747.95|2380|238|5099.52|68.20%
9308BMV|=|7|2976|0.10%|425.14|945|135|2031|68.20%
9317BMV|=|9|3319|0.10%|368.78|1926|214|1393|42.00%
9319BMV|=|1|350|0.00%|350|620|620|-270|-77.10%
9321BMV|=|17|10806.33|0.40%|635.67|4978.65|292.86|5827.68|53.90%
Total|Total E90 / E92|44|24930.85|0.008|566.61|10849.65|246.58|14081.2|0.565
F10|F10 M5
5000.1BMV|=|18|9128.42|0.30%|507.13|4122|229|5006.42|54.80%
5001BMV|=|14|14973.83|0.005|1069.56|3850|275|11123.83|0.743
5002BMV|=|4|2091|0.10%|522.75|616|154|1475|70.50%
5004BMV|=|22|7366.99|0.20%|334.86|1936|88|5430.99|73.70%
5005BMV|=|5|5673|0.002|1134.6|1755|351|3918|0.691
Total|Total F10 M5|63|39233.24|1.30%|622.75|12279|194.9|26954.24|68.70%`;

const year18 = `|Inventory
|AERO
|8300MEV|0|0|0.00%|0|0
|AUDI
|R8
VUD2120|=|54|87609.37|2.80%|1622.4|26892
VUD2150|=|32|78026.76|2.50%|2438.34|21760
VUD2170|=|65|124050.9|0.039|1908.48|31200
Total|Total R8|151|289687.1|9.20%|1918.46|79852
Total|Total AUDI|151|289687.1|9.20%|1918.46|79852
|BENTLEY
|BR-10RS
1800BOV|=|7|16312|0.50%|2330.29|0
1801BOV|=|6|15705|0.005|2617.5|0
1802BOV|=|5|8983|0.003|1796.6|0
1803BOV|=|5|4275|0.10%|855|435.48
Total|Total BR-10RS|23|45275|1.40%|1968.48|435.48
Total|Total BENTLEY|23|45275|1.40%|1968.48|435.48
|BMW
E70|E70 X5M / E71 X6M
9600BMV|=|23|17604.49|0.60%|765.41|5865
9603BMV|=|2|1192|0|596|278
9604BMV|=|6|5756.95|0.002|959.49|2130
9650BMV|=|4|3309.52|0.10%|827.38|1075.36
Total|Total E70 X5M|35|27862.96|0.90%|796.08|9348.36
E90|E90 / E92 / E93 M3
9300BMV|=|10|8157|0.003|815.7|2380
9301BMV|=|9|12695|0.40%|1410.56|8163
9306BMV|=|1|977|0.00%|977|620.49
9308BMV|=|27|12805.66|0.40%|474.28|3645
9317BMV|=|15|5801.5|0.002|386.77|3210
9321BMV|=|31|20365.95|0.60%|656.97|8950.59
Total|Total E90 / E92|93|60802.11|1.90%|653.79|26969.08
F10|F10 5 SERIES M-TECH ONLY
9800BMV|=|5|2272.08|0.10%|454.42|1536.37
Total|Total F10 5 SERIES|5|2272.08|0.10%|454.42|1536.37
F10|F10 M5
5000.1BMV|=|31|22072.12|0.70%|712|7099
5001BMV|=|23|25619.34|0.80%|1113.88|6325
5002BMV|=|23|10516.84|0.30%|457.25|3542
5004BMV|=|33|10424.99|0.30%|315.91|2904
5005BMV|=|9|8005.96|0.30%|889.55|3159
Total|Total F10 M5|119|76639.25|2.40%|644.03|23029
F12|F12 M6
6000BMV|=|27|27824.28|0.90%|1030.53|5724
6001BMV|=|32|41258.55|0.013|1289.33|11264
6002BMV|=|7.5|8639.68|0.30%|1151.96|3525
6003BMV|=|27|17027.85|0.50%|630.66|3780
6004BMV|=|7|7187.12|0.20%|1026.73|2093
Total|Total F12 M6|100.5|101937.5|0.032|1014.3|26386
F30|F30 3-SERIES M-SPORT ONLY
3000BMV|=|3|1788|0.10%|596|756
Total|Total F30 3-SERIES|3|1788|0.10%|596|756
F32|F32 4-SERIES M-SPORT ONLY
3100BMV|=|3|1788|0.10%|596|970.92
Total|Total F32 4-SERIES|3|1788|0.10%|596|970.92
F85|F85 / F86 X5M / X6M
5121BMV|=|12|11661|0.40%|971.75|3600`;

const titles = ['Amount', '% of Sales', 'Avg Price', 'COGS', 'Avg COGS', 'Gross Margin', 'Gross Margin %', ''];
const blocks = [
  { heading: 'Jan - Dec 20', rows: year20, values: 8, centred: false },
  { heading: 'Jan 1 - Dec 30, 19', rows: year19, values: 8, centred: true },
  { heading: 'Jan - Dec 18', rows: year18, values: 4, centred: true },
];
const letters = 'N O P Q R S T U V W X Y Z AA AB AC AD AE AF AG AH AI AJ AK AL AM AN AO AP'.split(' ');
const widths = [114, 104, 172, 106, 106, 106, 104, 106, 106, 106, 106,
  114, 104, 258, 106, 106, 106, 106, 106, 106, 106, 106,
  114, 104, 202, 106, 106, 106, 106];
const activeRow = 50;
const lastRow = 60;
const filterButton = '<button class="filter" aria-label="Filter"></button>';

for (const block of blocks) {
  const body = block.rows.split('\n').map(line => {
    const cells = line.split('|');
    cells[1] = cells[1].replace('=', cells[0]);
    return cells;
  });
  block.grid = [['', '', block.heading], ['', '', 'Qty', ...titles], ...body];
}

function cell(block, row, col) {
  const data = block.grid[row - 1];
  const text = data[col] || '';
  const classes = [];
  if (col === 0) classes.push('code');
  if (col === 1) classes.push('name');
  if (col === 2) classes.push(block.centred ? 'qty mid' : 'qty');
  if (row > 2 && col > 1 && !(col === 2 && block.centred)) classes.push('num');
  if (row === 2 && col === 9) classes.push('open');
  if (col === 10) classes.push('edge');
  if (text && row > 1 && col > 0 && !data[col + 1] && (row === 2 || col === 1)) classes.push('spill');
  return `<td class="${classes.join(' ')}">${text}${row === 1 ? filterButton : ''}</td>`;
}

let html = '<colgroup><col style="width:46px"><col style="width:8px">' +
  widths.map(w => `<col style="width:${w}px">`).join('') + '</colgroup>';
html += '<thead><tr><th class="corner"><svg viewBox="0 0 30 31"><path d="M30 0v31H0z" fill="#dcdcdc"/></svg></th><th></th>' +
  letters.map(l => `<th scope="col">${l}</th>`).join('') + '</tr></thead><tbody>';
for (let row = 1; row <= lastRow; row++) {
  html += `<tr><th scope="row"${row === activeRow ? ' class="here"' : ''}>${row}</th>`;
  html += `<td class="edge">${row === 1 ? filterButton : ''}</td>`;
  for (const block of blocks) {
    for (let col = 0; col < block.values + 3; col++) html += cell(block, row, col);
  }
  html += '</tr>';
}
document.getElementById('grid').innerHTML = html + '</tbody>';
```
